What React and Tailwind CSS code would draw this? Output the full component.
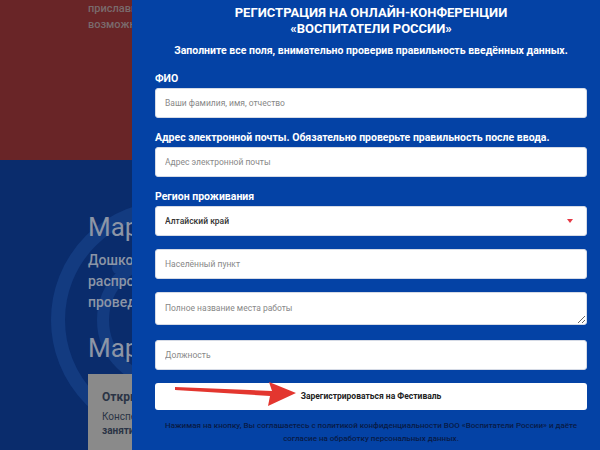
import { useState } from "react";

const font = { fontFamily: 'Roboto, "Liberation Sans", sans-serif' };

export default function App() {
  const [form, setForm] = useState({ fio: "", email: "", city: "", work: "", post: "" });
  const set = (e) => setForm((p) => ({ ...p, [e.target.name]: e.target.value }));

  return (
    <div className="relative h-[450px] w-[600px] overflow-hidden" style={font}>
      {/* page behind the modal */}
      <div className="flex h-[160px] flex-col bg-[#692527] pl-[88px] pt-[1px] text-[11px] font-medium leading-[16px] text-[#7a6a6c]">
        <p>приславшие</p>
        <p>возможность</p>
      </div>
      <div className="relative h-[290px] bg-[#0a2c6c]">
        <svg className="absolute left-0 top-0" width="200" height="290" viewBox="0 0 200 290">
          <circle cx="170" cy="160" r="112" fill="none" stroke="#133b80" strokeWidth="14" />
          <circle cx="165" cy="160" r="62" fill="none" stroke="#133b80" strokeWidth="12" />
          <circle cx="118" cy="108" r="6" fill="#133b80" />
        </svg>
        <div className="relative pl-[88px] pt-[50px] text-[#8c95a6]">
          <p className="text-[26px] leading-[34px]">Марафон</p>
          <div className="mt-[6px] text-[14px] font-medium leading-[21px]">
            <p>Дошкольное</p>
            <p>распространение</p>
            <p>проведение</p>
          </div>
          <p className="mt-[18px] text-[26px] leading-[34px]">Марафон</p>
          <div className="mt-[9px] h-[80px] w-[100px] bg-[#8a8a8a] px-[14px] pt-[14px] text-[#2b3445]">
            <p className="text-[12px] font-bold">Открытые</p>
            <p className="mt-[4px] text-[10px] leading-[14px]">Конспекты</p>
            <p className="text-[10px] font-bold leading-[14px]">занятий</p>
          </div>
        </div>
      </div>

      {/* modal */}
      <div className="absolute left-[132px] top-0 h-[450px] w-[468px] bg-[#0442a5] pl-[23px] pr-[13px]">
        <div className="flex flex-col">
          <h1 className="pt-[5px] text-center text-[13px] font-bold uppercase leading-[16px] text-white">
            Регистрация на онлайн-конференции
            <br />
            «Воспитатели России»
          </h1>
          <p className="mt-[7px] whitespace-nowrap text-center text-[10.5px] font-bold leading-[14px] text-white">
            Заполните все поля, внимательно проверив правильность введённых данных.
          </p>

          <Label className="mt-[15px]">ФИО</Label>
          <input name="fio" value={form.fio} onChange={set} placeholder="Ваши фамилия, имя, отчество" className={inputCls} />

          <Label className="mt-[14px]">Адрес электронной почты. Обязательно проверьте правильность после ввода.</Label>
          <input name="email" value={form.email} onChange={set} placeholder="Адрес электронной почты" className={inputCls} />

          <Label className="mt-[14px]">Регион проживания</Label>
          <div className="relative">
            <select className={`${inputCls} appearance-none font-medium text-[#222]`} defaultValue="Алтайский край">
              <option>Алтайский край</option>
            </select>
            <span className="pointer-events-none absolute right-[14px] top-[13px] h-0 w-0 border-x-[3px] border-t-[4px] border-x-transparent border-t-[#e53945]" />
          </div>

          <input name="city" value={form.city} onChange={set} placeholder="Населённый пункт" className={`${inputCls} mt-[13px]`} />
          <textarea
            name="work"
            value={form.work}
            onChange={set}
            placeholder="Полное название места работы"
            className={`${inputCls} mt-[13px] h-[33px] resize-y pt-[9px]`}
          />
          <input name="post" value={form.post} onChange={set} placeholder="Должность" className={`${inputCls} mt-[15px]`} />

          <button
            type="button"
            className="mt-[13px] h-[27px] w-full rounded-[3px] bg-white text-[8.5px] font-bold text-[#222]"
          >
            Зарегистрироваться на Фестиваль
          </button>

          <p className="mt-[9px] whitespace-nowrap text-center text-[8px] font-medium leading-[13px] text-[#081a45]">
            Нажимая на кнопку, Вы соглашаетесь с политикой конфиденциальности ВОО «Воспитатели России» и даёте
            <br />
            согласие на обработку персональных данных.
          </p>
        </div>
      </div>

      {/* red arrow annotation */}
      <svg className="absolute left-[170px] top-[379px]" width="130" height="30" viewBox="0 0 130 30">
        <path d="M5 8 L102 12 L99 3 L126 14 L98 27 L100 17 L5 11 Z" fill="#e3362f" />
      </svg>
    </div>
  );
}

function Label({ children, className = "" }) {
  return <label className={`mb-[3px] block text-[10.5px] font-bold leading-[12px] text-white ${className}`}>{children}</label>;
}

const inputCls =
  "block h-[30px] w-full rounded-[3px] border border-[#d6dbe6] bg-white px-[9px] text-[8.5px] text-[#333] outline-none placeholder:text-[#888]";
